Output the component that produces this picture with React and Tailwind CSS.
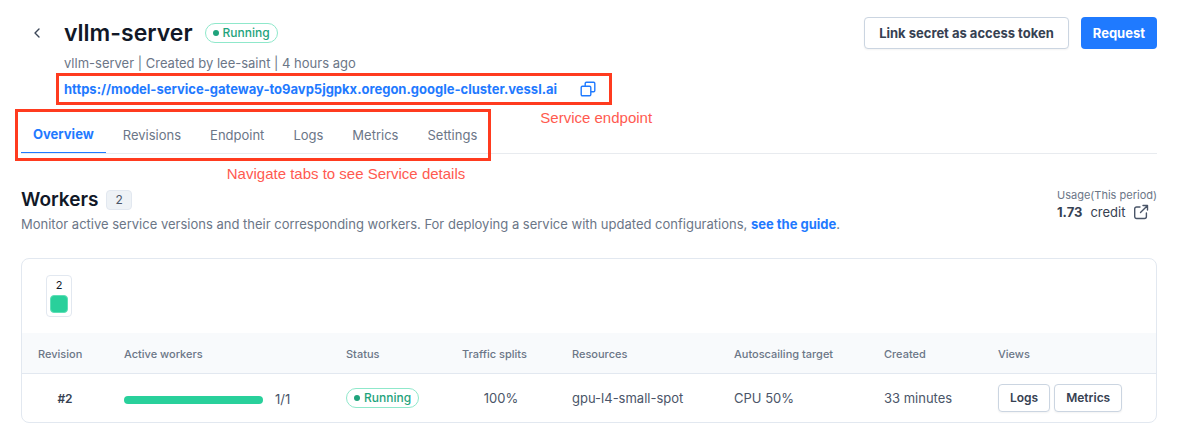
import React from "react";

const TABS = ["Revisions", "Endpoint", "Logs", "Metrics", "Settings"];

function StatusBadge({ label }) {
  return (
    <span className="inline-flex h-5 items-center gap-1 rounded-full border border-[#8fe8cb] px-[7px] text-xs font-medium text-[#1fa37c]">
      <span className="size-1.5 rounded-full bg-[#1fa37c]" />
      {label}
    </span>
  );
}

function BackIcon() {
  return (
    <svg viewBox="0 0 6 10" className="h-2.5 w-1.5" fill="none" stroke="#3b4657" strokeWidth="1.4" strokeLinecap="round" strokeLinejoin="round">
      <path d="M5 1 1 5l4 4" />
    </svg>
  );
}

function CopyIcon() {
  return (
    <svg viewBox="0 0 16 16" className="size-4" fill="none" stroke="#1f7aff" strokeWidth="1.4" strokeLinejoin="round">
      <rect x="1.2" y="5.2" width="9.6" height="9.6" rx="1.2" />
      <path d="M5.2 5.2V2.400a1.200 1.200 0 0 1 1.200-1.200h7.200a1.200 1.200 0 0 1 1.200 1.200v7.200a1.200 1.200 0 0 1-1.200 1.200h-2.800" />
    </svg>
  );
}

function ExternalIcon() {
  return (
    <svg viewBox="0 0 16 16" className="size-4" fill="none" stroke="#4a5568" strokeWidth="1.4" strokeLinecap="round" strokeLinejoin="round">
      <path d="M7 3H3.600A1.900 1.900 0 0 0 1.700 4.900v7.700a1.900 1.900 0 0 0 1.900 1.900h7.900a1.900 1.900 0 0 0 1.900-1.900V9" />
      <path d="M10 1.500h4.500V6M14.300 1.700 7.500 8.500" />
    </svg>
  );
}

function RowButton({ children }) {
  return (
    <button type="button" className="h-7 rounded-sm border border-[#cbd5e1] bg-white px-[11px] text-xs font-semibold text-[#364152] shadow-xs">
      {children}
    </button>
  );
}

export default function App() {
  return (
    <main className="bg-white px-[21px] pt-[17px] pb-4 font-['Inter',sans-serif] text-[13px] text-[#4a5568]">
      <header className="flex items-start justify-between">
        <div className="flex">
          <button type="button" aria-label="Back" className="flex h-8 w-8 items-center justify-center">
            <BackIcon />
          </button>
          <div className="pl-[11px]">
            <div className="flex h-8 items-center gap-3">
              <h1 className="text-[23px] font-semibold text-[#111827]">vllm-server</h1>
              <StatusBadge label="Running" />
            </div>
            <p className="mt-1 leading-5 text-[#6b7687]">vllm-server | Created by lee-saint | 4 hours ago</p>
            <div className="relative mt-1.5 flex h-5 items-center gap-[23px]">
              <a href="https://model-service-gateway-to9avp5jgpkx.oregon.google-cluster.vessl.ai" className="pt-px font-bold text-[#1f7aff]">
                https://model-service-gateway-to9avp5jgpkx.oregon.google-cluster.vessl.ai
              </a>
              <button type="button" aria-label="Copy endpoint">
                <CopyIcon />
              </button>
              <div className="pointer-events-none absolute -top-1.5 -right-4 -bottom-1.5 -left-2 border-3 border-[#ff3b1f]" />
              <span className="absolute top-full -right-14 mt-2 font-['Liberation_Sans',sans-serif] text-[15px] whitespace-nowrap text-[#ff5a50]">
                Service endpoint
              </span>
            </div>
          </div>
        </div>
        <div className="flex gap-3">
          <button type="button" className="h-8 rounded-sm border border-[#cbd5e1] bg-white px-3.5 pt-px font-bold text-[#364152] shadow-xs">
            Link secret as access token
          </button>
          <button type="button" className="h-8 rounded-sm bg-[#1f7aff] px-3 pt-px font-bold text-white">
            Request
          </button>
        </div>
      </header>

      <nav className="mt-4 flex border-b border-[#e8ebef]">
        <div className="relative flex gap-[17px]">
          <a href="#overview" className="flex h-[38px] items-center border-b border-[#1f7aff] px-3 pt-0.5 font-bold text-[#1f7aff]">
            Overview
          </a>
          <div className="flex h-[38px] items-center gap-[29px] pt-1">
            {TABS.map((tab) => (
              <a key={tab} href={"#" + tab.toLowerCase()} className="text-[#6b7687]">
                {tab}
              </a>
            ))}
          </div>
          <div className="pointer-events-none absolute -top-1.5 -right-3.5 -bottom-2 -left-1.5 border-3 border-[#ff3b1f]" />
          <span className="absolute top-full right-3 mt-2.5 font-['Liberation_Sans',sans-serif] text-[15px] whitespace-nowrap text-[#ff5a50]">
            Navigate tabs to see Service details
          </span>
        </div>
      </nav>

      <section className="mt-[33px]">
        <div className="flex justify-between">
          <div>
            <div className="flex h-[26px] items-center gap-2">
              <h2 className="text-[19px] font-semibold text-[#111827]">Workers</h2>
              <span className="flex h-5 items-center rounded-sm border border-[#e2e8f0] bg-[#eef2f6] px-2 text-xs">2</span>
            </div>
            <p className="mt-px leading-5 text-[#6b7687]">
              Monitor active service versions and their corresponding workers. For deploying a service with updated configurations,{" "}
              <a href="#guide" className="font-bold text-[#1f7aff]">see the guide</a>.
            </p>
          </div>
          <div>
            <p className="text-[11px] leading-4 text-[#6b7687]">Usage(This period)</p>
            <div className="flex items-center gap-2 leading-[18px] text-[#364152]">
              <strong className="font-bold">1.73</strong>
              <span>credit</span>
              <a href="#usage" aria-label="Usage details"><ExternalIcon /></a>
            </div>
          </div>
        </div>

        <div className="mt-6 overflow-hidden rounded-lg border border-[#e2e8f0]">
          <div className="flex px-6 py-4">
            <div className="flex w-[26px] flex-col items-center gap-1 rounded-sm border border-[#e2e8f0] py-[3px] text-[11px] leading-3 text-[#111827]">
              2
              <span className="size-[18px] rounded-sm border border-[#5fdfb6] bg-[#29d09b]" />
            </div>
          </div>
          <table className="w-full table-fixed text-left">
            <colgroup>
              <col className="w-[86px]" />
              <col className="w-[222px]" />
              <col className="w-[116px]" />
              <col className="w-[110px]" />
              <col className="w-[162px]" />
              <col className="w-[150px]" />
              <col className="w-[114px]" />
              <col className="w-[174px]" />
            </colgroup>
            <thead>
              <tr className="h-10 border-b border-[#e2e8f0] bg-[#f8fafc] text-[11px] whitespace-nowrap text-[#6b7687]">
                <th className="px-4 pt-0.5 font-medium">Revision</th>
                <th className="px-4 pt-0.5 font-medium">Active workers</th>
                <th className="px-4 pt-0.5 font-medium">Status</th>
                <th className="px-4 pt-0.5 font-medium">Traffic splits</th>
                <th className="px-4 pt-0.5 font-medium">Resources</th>
                <th className="px-4 pt-0.5 font-medium">Autoscailing target</th>
                <th className="px-4 pt-0.5 font-medium">Created</th>
                <th className="px-4 pt-0.5 font-medium">Views</th>
              </tr>
            </thead>
            <tbody>
              <tr className="h-[49px] whitespace-nowrap">
                <td className="pt-0.5 text-center text-xs font-semibold text-[#364152]">#2</td>
                <td className="px-4 pt-1">
                  <div className="flex items-center gap-3">
                    <div className="h-2 w-[139px] rounded-full bg-[#29d09b]" />
                    <span>1/1</span>
                  </div>
                </td>
                <td className="px-4"><div className="flex"><StatusBadge label="Running" /></div></td>
                <td className="pt-0.5 text-center">100%</td>
                <td className="px-4 pt-0.5">gpu-l4-small-spot</td>
                <td className="px-4 pt-0.5">CPU 50%</td>
                <td className="px-4 pt-0.5">33 minutes</td>
                <td className="px-4">
                  <div className="flex gap-1">
                    <RowButton>Logs</RowButton>
                    <RowButton>Metrics</RowButton>
                  </div>
                </td>
              </tr>
            </tbody>
          </table>
        </div>
      </section>
    </main>
  );
}
